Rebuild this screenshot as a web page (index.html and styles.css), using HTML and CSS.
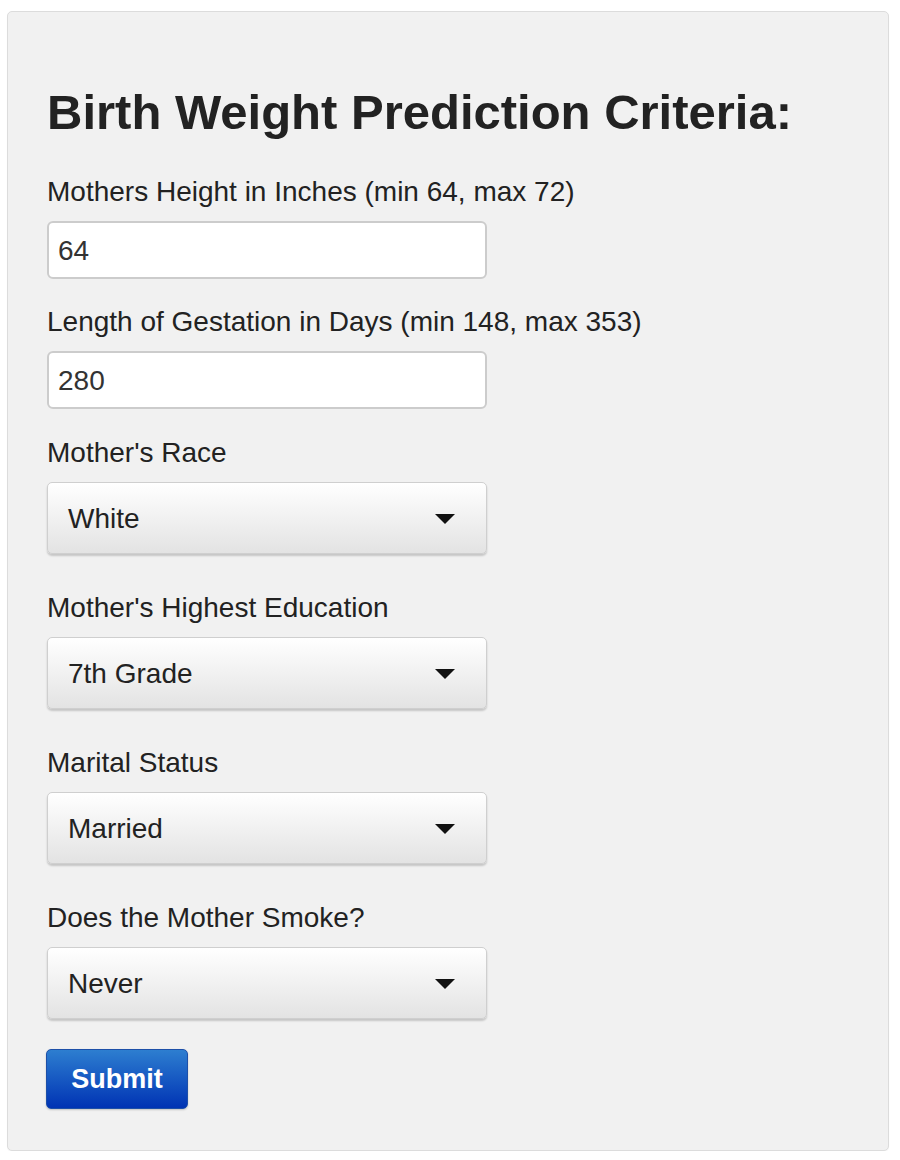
FILE: index.html
```html
<!DOCTYPE html>
<html>
<head>
<meta charset="utf-8">
<title>Birth Weight Prediction Criteria</title>
<link rel="stylesheet" href="styles.css">
</head>
<body>
<div class="panel">
  <h2 class="title">Birth Weight Prediction Criteria:</h2>
  <div class="field">
    <label class="label">Mothers Height in Inches (min 64, max 72)</label>
    <div class="input">64</div>
  </div>
  <div class="field field-gap">
    <label class="label">Length of Gestation in Days (min 148, max 353)</label>
    <div class="input">280</div>
  </div>
  <div class="field field-select">
    <label class="label">Mother's Race</label>
    <div class="select"><span>White</span><span class="caret"></span></div>
  </div>
  <div class="field field-select">
    <label class="label">Mother's Highest Education</label>
    <div class="select"><span>7th Grade</span><span class="caret"></span></div>
  </div>
  <div class="field field-select">
    <label class="label">Marital Status</label>
    <div class="select"><span>Married</span><span class="caret"></span></div>
  </div>
  <div class="field field-select last">
    <label class="label">Does the Mother Smoke?</label>
    <div class="select"><span>Never</span><span class="caret"></span></div>
  </div>
  <button class="submit">Submit</button>
</div>
</body>
</html>
```

FILE: styles.css
```css
html, body {
  margin: 0;
  padding: 0;
  background: #ffffff;
}
body {
  padding: 11px 11px 0 7px;
  font-family: "Liberation Sans", Arial, sans-serif;
  color: #222222;
}
.panel {
  width: 882px;
  box-sizing: border-box;
  height: 1140px;
  background: #f1f1f1;
  border: 1px solid #dcdcdc;
  border-radius: 5px;
  padding: 72px 39px 0 39px;
  box-shadow: 0 1px 1px rgba(0,0,0,0.04);
}
.title {
  margin: 0 0 34px 0;
  font-size: 49px;
  line-height: 56px;
  font-weight: bold;
  color: #222222;
}
.field {
  display: flex;
  flex-direction: column;
  margin-bottom: 25px;
}
.field-gap {
  margin-bottom: 26px;
}
.field-select {
  margin-bottom: 36px;
}
.field-select.last {
  margin-bottom: 30px;
}
.label {
  font-size: 28px;
  line-height: 30px;
  padding-top: 3px;
  margin-bottom: 14px;
  color: #222222;
}
.input {
  width: 440px;
  height: 58px;
  box-sizing: border-box;
  background: #ffffff;
  border: 2px solid #cccccc;
  border-radius: 6px;
  padding: 0 9px;
  font-size: 28px;
  line-height: 55px;
  color: #333333;
}
.select {
  width: 440px;
  height: 72px;
  box-sizing: border-box;
  display: flex;
  align-items: center;
  justify-content: space-between;
  padding: 2px 31px 0 20px;
  border: 1px solid #cfcfcf;
  border-radius: 5px;
  background: linear-gradient(#ffffff, #e3e3e3);
  box-shadow: 0 2px 2px rgba(0,0,0,0.18);
  font-size: 28px;
  color: #222222;
}
.caret {
  width: 0;
  height: 0;
  border-left: 10px solid transparent;
  border-right: 10px solid transparent;
  border-top: 10px solid #111111;
}
.submit {
  width: 142px;
  height: 60px;
  box-sizing: border-box;
  margin-left: -1px;
  border: 1px solid #1d4fa8;
  border-radius: 5px;
  background: linear-gradient(#2d7ed0, #0033b4);
  color: #ffffff;
  font-family: "Liberation Sans", Arial, sans-serif;
  font-size: 27px;
  font-weight: bold;
  padding: 0;
  box-shadow: 0 1px 2px rgba(0,0,0,0.2);
}
```
